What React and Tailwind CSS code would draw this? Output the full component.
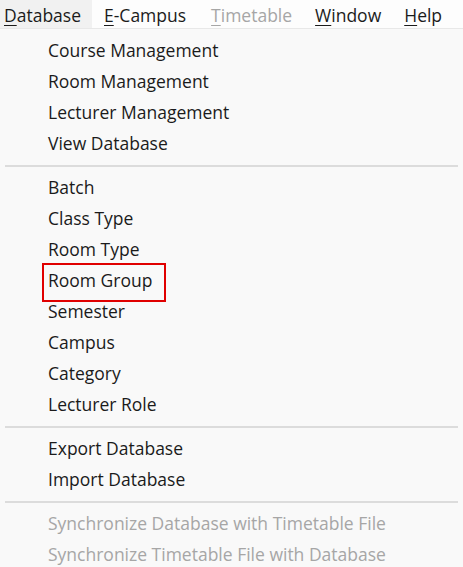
import React from 'react';

const font = { fontFamily: '"Open Sans", "Noto Sans", sans-serif' };

// mnemonic letter gets an underline, like a native menubar
function Mnemonic({ label, disabled }) {
  return (
    <span className={disabled ? 'text-[#a6a6a6]' : 'text-[#1b1b1b]'}>
      <span className="underline underline-offset-[3px] decoration-1">{label[0]}</span>
      {label.slice(1)}
    </span>
  );
}

const groups = [
  ['Course Management', 'Room Management', 'Lecturer Management', 'View Database'],
  ['Batch', 'Class Type', 'Room Type', 'Room Group', 'Semester', 'Campus', 'Category', 'Lecturer Role'],
  ['Export Database', 'Import Database'],
];

const disabledItems = [
  'Synchronize Database with Timetable File',
  'Synchronize Timetable File with Database',
];

function Item({ label, disabled, marked }) {
  return (
    <div className="relative h-[31px] flex items-center pl-[48px]">
      <span className={disabled ? 'text-[#a6a6a6]' : 'text-[#1b1b1b]'}>{label}</span>
      {marked && (
        <span className="absolute left-[42px] top-[-2px] w-[124px] h-[39px] border-2 border-[#e00000]" />
      )}
    </div>
  );
}

function Separator() {
  return (
    <div className="h-[13px] flex items-center px-[5px]">
      <div className="w-full h-[2px] bg-[#dcdcdc]" />
    </div>
  );
}

export default function App() {
  return (
    <div className="w-[463px] h-[567px] bg-[#f9f9f9] overflow-hidden text-[17.5px] leading-none" style={font}>
      <div className="h-[29px] bg-[#fdfdfd] flex items-stretch border-b border-[#e8e8e8]">
        <div className="w-[92px] bg-[#f1f1f1] flex items-center pl-[4px] pt-[3px]">
          <Mnemonic label="Database" />
        </div>
        <div className="flex items-center pl-[12px] pt-[3px]">
          <Mnemonic label="E-Campus" />
        </div>
        <div className="flex items-center pl-[25px] pt-[3px]">
          <Mnemonic label="Timetable" disabled />
        </div>
        <div className="flex items-center pl-[23px] pt-[3px]">
          <Mnemonic label="Window" />
        </div>
        <div className="flex items-center pl-[23px] pt-[3px]">
          <Mnemonic label="Help" />
        </div>
      </div>

      <div className="pt-[6px]">
        {groups.map((items, i) => (
          <div key={i}>
            {items.map((label) => (
              <Item key={label} label={label} marked={label === 'Room Group'} />
            ))}
            <Separator />
          </div>
        ))}
        {disabledItems.map((label) => (
          <Item key={label} label={label} disabled />
        ))}
      </div>
    </div>
  );
}
